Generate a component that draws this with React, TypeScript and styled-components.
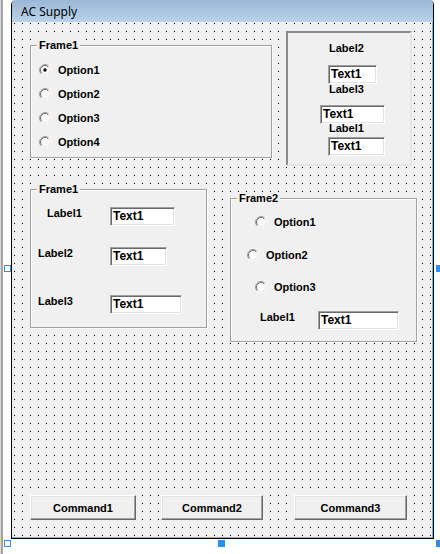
import styled, { createGlobalStyle } from "styled-components";

const GlobalStyle = createGlobalStyle`
  html, body {
    margin: 0;
    padding: 0;
    background: #ffffff;
  }
  body {
    font-family: "Liberation Sans", Arial, sans-serif;
    color: #000;
  }
`;

const Stage = styled.div`
  position: relative;
  display: flex;
  align-items: flex-start;
  width: 440px;
  height: 554px;
  overflow: hidden;
  background: #ffffff;
`;

const Gutter = styled.div`
  flex: none;
  width: 11px;
  height: 100%;
  background: linear-gradient(to right, #dadada 0 1px, #a3a3a3 1px 3px, #ffffff 3px);
`;

const FormWindow = styled.div`
  flex: none;
  display: flex;
  flex-direction: column;
  box-sizing: border-box;
  width: 423px;
  height: 539px;
  border: 1px solid #000;
  border-top: none;
  border-radius: 5px 5px 0 0;
  overflow: hidden;
`;

const TitleBar = styled.div`
  flex: none;
  display: flex;
  align-items: center;
  height: 22px;
  padding: 1px 0 0 9px;
  box-sizing: border-box;
  background: linear-gradient(#9cb7d6, #bad2ea);
  font: 12px "Noto Sans", "Liberation Sans", sans-serif;
`;

const Client = styled.div`
  flex: 1;
  display: flex;
  flex-direction: column;
  padding: 9px 0 17px 18px;
  border-right: 1px solid #62bde9;
  border-bottom: 1px solid #62bde9;
  background-color: #f0f0f0;
  background-image: conic-gradient(at 1px 1px, transparent 75%, #000 0);
  background-size: 8px 8px;
  background-position: 2px 1px;
`;

const Row = styled.div<{ $mt?: number }>`
  display: flex;
  align-items: flex-start;
  margin-top: ${(p) => p.$mt ?? 0}px;
`;

const Frame = styled.div<{ $w: number; $h: number; $mt?: number; $ml?: number }>`
  position: relative;
  flex: none;
  display: flex;
  flex-direction: column;
  align-items: flex-start;
  box-sizing: border-box;
  width: ${(p) => p.$w}px;
  height: ${(p) => p.$h}px;
  margin: ${(p) => p.$mt ?? 0}px 0 0 ${(p) => p.$ml ?? 0}px;
  border: 1px solid #a0a0a0;
  box-shadow: inset 1px 1px 0 #fff, 1px 1px 0 #fff;
  background: #f0f0f0;
`;

const FrameCaption = styled.span`
  position: absolute;
  top: -7px;
  left: 6px;
  padding: 0 2px;
  background: #f0f0f0;
  font-weight: bold;
  font-size: 11px;
  line-height: 13px;
  white-space: nowrap;
`;

const SunkenBox = styled.div<{ $w: number; $h: number; $ml?: number }>`
  flex: none;
  display: flex;
  flex-direction: column;
  align-items: flex-start;
  box-sizing: border-box;
  width: ${(p) => p.$w}px;
  height: ${(p) => p.$h}px;
  margin-left: ${(p) => p.$ml ?? 0}px;
  border: 2px solid;
  border-color: #8a8a8a #e6e6e6 #e6e6e6 #8a8a8a;
  background: #f0f0f0;
`;

const Caption = styled.span<{ $ml?: number; $mt?: number }>`
  display: block;
  margin: ${(p) => p.$mt ?? 0}px 0 0 ${(p) => p.$ml ?? 0}px;
  font-weight: bold;
  font-size: 11px;
  line-height: 13px;
  white-space: nowrap;
`;

const TextBox = styled.div<{ $w: number; $ml?: number; $mt?: number }>`
  box-sizing: border-box;
  width: ${(p) => p.$w}px;
  height: 19px;
  margin: ${(p) => p.$mt ?? 0}px 0 0 ${(p) => p.$ml ?? 0}px;
  padding-left: 2px;
  background: #ffffff;
  border: 1px solid;
  border-color: #a0a0a0 #ffffff #ffffff #a0a0a0;
  box-shadow: inset 1px 1px 0 #696969, inset -1px -1px 0 #e3e3e3;
  font-weight: bold;
  font-size: 12px;
  line-height: 17px;
  white-space: nowrap;
`;

const FieldRow = styled.div<{ $label: number; $mt?: number }>`
  display: grid;
  grid-template-columns: ${(p) => p.$label}px auto;
  align-items: start;
  margin-top: ${(p) => p.$mt ?? 0}px;
`;

const OptionRow = styled.div<{ $ml: number; $mt?: number }>`
  display: flex;
  align-items: center;
  gap: 7px;
  height: 24px;
  margin: ${(p) => p.$mt ?? 0}px 0 0 ${(p) => p.$ml}px;
  font-weight: bold;
  font-size: 11px;
  line-height: 13px;
  white-space: nowrap;

  svg {
    flex: none;
  }
`;

const ButtonRow = styled.div`
  display: flex;
  margin-top: auto;
`;

const CommandButton = styled.div<{ $w: number; $ml?: number }>`
  display: flex;
  align-items: center;
  justify-content: center;
  box-sizing: border-box;
  width: ${(p) => p.$w}px;
  height: 25px;
  margin-left: ${(p) => p.$ml ?? 0}px;
  background: #f0f0f0;
  border: 1px solid;
  border-color: #ffffff #696969 #696969 #ffffff;
  box-shadow: inset -1px -1px 0 #a0a0a0, inset 1px 1px 0 #e3e3e3;
  font-weight: bold;
  font-size: 11px;
  white-space: nowrap;
`;

const Handle = styled.div<{ $x: number; $y: number; $filled?: boolean }>`
  position: absolute;
  left: ${(p) => p.$x}px;
  top: ${(p) => p.$y}px;
  box-sizing: border-box;
  width: 7px;
  height: 7px;
  border: 1px solid #2f8fe8;
  background: ${(p) => (p.$filled ? "#2f8fe8" : "#ffffff")};
`;

const Radio = ({ checked }: { checked?: boolean }) => (
  <svg width="12" height="12" viewBox="0 0 12 12">
    <circle cx="6" cy="6" r="4.5" fill="#ffffff" />
    <path d="M2.11 9.89A5.5 5.5 0 0 1 9.89 2.11" stroke="#a0a0a0" fill="none" />
    <path d="M9.89 2.11A5.5 5.5 0 0 1 2.11 9.89" stroke="#ffffff" fill="none" />
    <path d="M2.82 9.18A4.5 4.5 0 0 1 9.18 2.82" stroke="#696969" fill="none" />
    <path d="M9.18 2.82A4.5 4.5 0 0 1 2.82 9.18" stroke="#e3e3e3" fill="none" />
    {checked && <circle cx="6" cy="6" r="1.7" fill="#000" />}
  </svg>
);

const Option = ({ label, ml, mt, checked }: { label: string; ml: number; mt?: number; checked?: boolean }) => (
  <OptionRow $ml={ml} $mt={mt}>
    <Radio checked={checked} />
    {label}
  </OptionRow>
);

export default function App() {
  return (
    <>
      <GlobalStyle />
      <Stage>
        <Gutter />
        <FormWindow>
          <TitleBar>AC Supply</TitleBar>
          <Client>
            <Row>
              <Frame $w={242} $h={113} $mt={14}>
                <FrameCaption>Frame1</FrameCaption>
                <Option label="Option1" ml={8} mt={12} checked />
                <Option label="Option2" ml={8} />
                <Option label="Option3" ml={8} />
                <Option label="Option4" ml={8} />
              </Frame>
              <SunkenBox $w={126} $h={135} $ml={14}>
                <Caption $ml={41} $mt={9}>Label2</Caption>
                <TextBox $w={49} $ml={40} $mt={10}>Text1</TextBox>
                <Caption $ml={41} $mt={-1}>Label3</Caption>
                <TextBox $w={65} $ml={32} $mt={9}>Text1</TextBox>
                <Caption $ml={41} $mt={-2}>Label1</Caption>
                <TextBox $w={57} $ml={40} $mt={2}>Text1</TextBox>
              </SunkenBox>
            </Row>

            <Row $mt={23}>
              <Frame $w={177} $h={139}>
                <FrameCaption>Frame1</FrameCaption>
                <FieldRow $label={79} $mt={17}>
                  <Caption $ml={16}>Label1</Caption>
                  <TextBox $w={65}>Text1</TextBox>
                </FieldRow>
                <FieldRow $label={79} $mt={21}>
                  <Caption $ml={7}>Label2</Caption>
                  <TextBox $w={57}>Text1</TextBox>
                </FieldRow>
                <FieldRow $label={79} $mt={29}>
                  <Caption $ml={7}>Label3</Caption>
                  <TextBox $w={72}>Text1</TextBox>
                </FieldRow>
              </Frame>
              <Frame $w={187} $h={144} $mt={9} $ml={23}>
                <FrameCaption>Frame2</FrameCaption>
                <Option label="Option1" ml={24} mt={11} />
                <Option label="Option2" ml={16} mt={9} />
                <Option label="Option3" ml={24} mt={8} />
                <FieldRow $label={87} $mt={12}>
                  <Caption $ml={29}>Label1</Caption>
                  <TextBox $w={81}>Text1</TextBox>
                </FieldRow>
              </Frame>
            </Row>

            <ButtonRow>
              <CommandButton $w={106}>Command1</CommandButton>
              <CommandButton $w={102} $ml={25}>Command2</CommandButton>
              <CommandButton $w={113} $ml={31}>Command3</CommandButton>
            </ButtonRow>
          </Client>
        </FormWindow>

        <Handle $x={4} $y={265} />
        <Handle $x={436} $y={265} $filled />
        <Handle $x={4} $y={540} />
        <Handle $x={218} $y={540} $filled />
        <Handle $x={436} $y={540} $filled />
      </Stage>
    </>
  );
}
